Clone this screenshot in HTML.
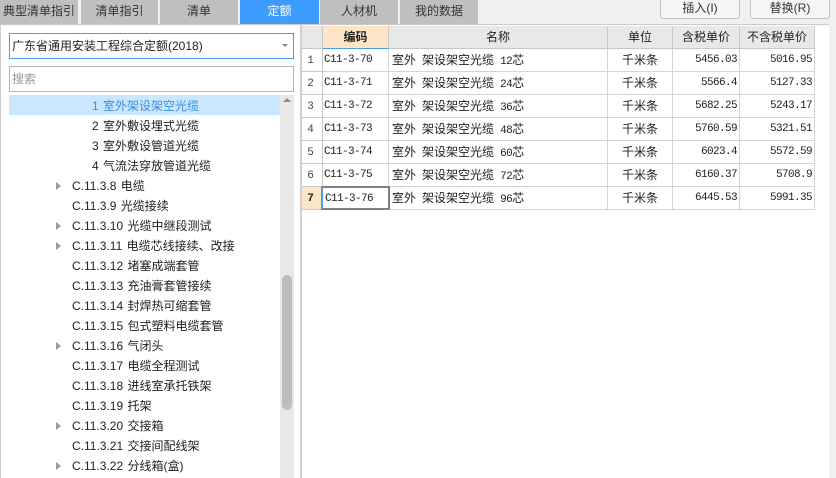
<!DOCTYPE html>
<html><head><meta charset="utf-8">
<style>
html,body{margin:0;padding:0;background:#f0f0f0;}
body{width:836px;height:478px;position:relative;overflow:hidden;font-family:"Liberation Sans","Noto Sans CJK SC",sans-serif;font-size:12px;color:#222;}
.a{position:absolute;white-space:nowrap;}
.tab{position:absolute;top:0;height:24px;background:#bfbfbf;color:#333;text-align:center;line-height:23px;font-size:12px;}
.btn{position:absolute;top:-3px;height:20px;width:78px;background:#f5f5f5;border:1px solid #c4c4c4;border-radius:3px;text-align:center;line-height:21px;color:#333;font-size:12px;}
.t{position:absolute;left:0;height:20px;line-height:20px;white-space:nowrap;color:#222;font-size:12px;word-spacing:1px;}
.arr{position:absolute;left:56px;width:0;height:0;border-left:5px solid #999;border-top:4px solid transparent;border-bottom:4px solid transparent;}
.c{position:absolute;height:23px;line-height:22px;white-space:nowrap;overflow:hidden;box-sizing:border-box;border-right:1px solid #d4d4d4;border-bottom:1px solid #d4d4d4;font-size:12px;color:#222;background:#fff;}
.h{background:#e8e8e8;text-align:center;border-color:#c8c8c8;color:#222;}
.m{font-family:"Liberation Mono","Noto Sans CJK SC",monospace;font-size:11px;letter-spacing:-0.6px;}
.cm{line-height:23px;}
.r{text-align:right;padding-right:2px;}
.nm{padding-left:3px;word-spacing:2.7px;}
.n{background:#fff;text-align:center;font-family:"Liberation Mono",monospace;font-size:11px;border-color:#c8c8c8;color:#444;padding-right:3px;line-height:25px;}
</style></head><body>
<div class="tab" style="left:0;width:78px;">典型清单指引</div>
<div class="tab" style="left:81px;width:77px;">清单指引</div>
<div class="tab" style="left:160px;width:78px;">清单</div>
<div class="tab" style="left:240px;width:79px;background:#3f9cff;color:#fff;">定额</div>
<div class="tab" style="left:320px;width:78px;">人材机</div>
<div class="tab" style="left:400px;width:78px;">我的数据</div>
<div class="btn" style="left:660px;">插入(I)</div>
<div class="btn" style="left:750px;">替换(R)</div>

<div class="a" style="left:0;top:24px;width:300px;height:454px;background:#fff;box-sizing:border-box;border-left:1px solid #d0d0d0;border-top:1px solid #c8c8c8;"></div>
<div class="a" style="left:9px;top:33px;width:285px;height:26px;box-sizing:border-box;border:1px solid #4a9bf0;background:#fff;line-height:24px;padding-left:2px;color:#222;">广东省通用安装工程综合定额(2018)</div>
<div class="a" style="left:282px;top:44px;width:0;height:0;border-top:3px solid #888;border-left:3px solid transparent;border-right:3px solid transparent;"></div>
<div class="a" style="left:9px;top:66px;width:285px;height:26px;box-sizing:border-box;border:1px solid #b5b5b5;background:#fff;line-height:24px;padding-left:2px;color:#999;">搜索</div>

<div class="a" style="left:9px;top:95px;width:271px;height:20px;background:#cbe6ff;"></div>
<div class="t" style="left:92px;top:96px;color:#3f8fd8;">1 室外架设架空光缆</div>
<div class="t" style="left:92px;top:116px;">2 室外敷设埋式光缆</div>
<div class="t" style="left:92px;top:136px;">3 室外敷设管道光缆</div>
<div class="t" style="left:92px;top:156px;">4 气流法穿放管道光缆</div>
<div class="arr" style="top:182px;"></div><div class="t" style="left:72px;top:176px;">C.11.3.8 电缆</div>
<div class="t" style="left:72px;top:196px;">C.11.3.9 光缆接续</div>
<div class="arr" style="top:222px;"></div><div class="t" style="left:72px;top:216px;">C.11.3.10 光缆中继段测试</div>
<div class="arr" style="top:242px;"></div><div class="t" style="left:72px;top:236px;">C.11.3.11 电缆芯线接续、改接</div>
<div class="t" style="left:72px;top:256px;">C.11.3.12 堵塞成端套管</div>
<div class="t" style="left:72px;top:276px;">C.11.3.13 充油膏套管接续</div>
<div class="t" style="left:72px;top:296px;">C.11.3.14 封焊热可缩套管</div>
<div class="t" style="left:72px;top:316px;">C.11.3.15 包式塑料电缆套管</div>
<div class="arr" style="top:342px;"></div><div class="t" style="left:72px;top:336px;">C.11.3.16 气闭头</div>
<div class="t" style="left:72px;top:356px;">C.11.3.17 电缆全程测试</div>
<div class="t" style="left:72px;top:376px;">C.11.3.18 进线室承托铁架</div>
<div class="t" style="left:72px;top:396px;">C.11.3.19 托架</div>
<div class="arr" style="top:422px;"></div><div class="t" style="left:72px;top:416px;">C.11.3.20 交接箱</div>
<div class="t" style="left:72px;top:436px;">C.11.3.21 交接间配线架</div>
<div class="arr" style="top:462px;"></div><div class="t" style="left:72px;top:456px;">C.11.3.22 分线箱(盒)</div>

<div class="a" style="left:280px;top:95px;width:14px;height:383px;background:#e8e8e8;"></div>
<div class="a" style="left:283px;top:98px;width:0;height:0;border-bottom:4px solid #8a8a8a;border-left:4px solid transparent;border-right:4px solid transparent;"></div>
<div class="a" style="left:282px;top:275px;width:10px;height:135px;background:#bdbdbd;border-radius:5px;"></div>

<div class="a" style="left:300px;top:24px;width:529px;height:454px;background:#fff;border-top:1px solid #c8c8c8;border-left:2px solid #d0d0d0;box-sizing:border-box;"></div>

<div class="c h" style="left:302px;top:26px;width:21px;height:23px;"></div>
<div class="c h" style="left:323px;top:26px;width:66px;height:23px;background:#fde6c8;font-weight:bold;border-bottom:1px solid #4a9bf0;">编码</div>
<div class="c h" style="left:389px;top:26px;width:219px;height:23px;">名称</div>
<div class="c h" style="left:608px;top:26px;width:65px;height:23px;">单位</div>
<div class="c h" style="left:673px;top:26px;width:67px;height:23px;">含税单价</div>
<div class="c h" style="left:740px;top:26px;width:75px;height:23px;">不含税单价</div>

<div class="c n" style="left:302px;top:49px;width:21px;">1</div><div class="c m cm" style="left:323px;top:49px;width:66px;padding-left:1px;">C11-3-70</div><div class="c nm" style="left:389px;top:49px;width:219px;">室外 架设架空光缆 <span class="m">12</span>芯</div><div class="c" style="left:608px;top:49px;width:65px;text-align:center;">千米条</div><div class="c m cm r" style="left:673px;top:49px;width:67px;">5456.03</div><div class="c m cm r" style="left:740px;top:49px;width:75px;">5016.95</div>

<div class="c n" style="left:302px;top:72px;width:21px;">2</div><div class="c m cm" style="left:323px;top:72px;width:66px;padding-left:1px;">C11-3-71</div><div class="c nm" style="left:389px;top:72px;width:219px;">室外 架设架空光缆 <span class="m">24</span>芯</div><div class="c" style="left:608px;top:72px;width:65px;text-align:center;">千米条</div><div class="c m cm r" style="left:673px;top:72px;width:67px;">5566.4</div><div class="c m cm r" style="left:740px;top:72px;width:75px;">5127.33</div>

<div class="c n" style="left:302px;top:95px;width:21px;">3</div><div class="c m cm" style="left:323px;top:95px;width:66px;padding-left:1px;">C11-3-72</div><div class="c nm" style="left:389px;top:95px;width:219px;">室外 架设架空光缆 <span class="m">36</span>芯</div><div class="c" style="left:608px;top:95px;width:65px;text-align:center;">千米条</div><div class="c m cm r" style="left:673px;top:95px;width:67px;">5682.25</div><div class="c m cm r" style="left:740px;top:95px;width:75px;">5243.17</div>

<div class="c n" style="left:302px;top:118px;width:21px;">4</div><div class="c m cm" style="left:323px;top:118px;width:66px;padding-left:1px;">C11-3-73</div><div class="c nm" style="left:389px;top:118px;width:219px;">室外 架设架空光缆 <span class="m">48</span>芯</div><div class="c" style="left:608px;top:118px;width:65px;text-align:center;">千米条</div><div class="c m cm r" style="left:673px;top:118px;width:67px;">5760.59</div><div class="c m cm r" style="left:740px;top:118px;width:75px;">5321.51</div>

<div class="c n" style="left:302px;top:141px;width:21px;">5</div><div class="c m cm" style="left:323px;top:141px;width:66px;padding-left:1px;">C11-3-74</div><div class="c nm" style="left:389px;top:141px;width:219px;">室外 架设架空光缆 <span class="m">60</span>芯</div><div class="c" style="left:608px;top:141px;width:65px;text-align:center;">千米条</div><div class="c m cm r" style="left:673px;top:141px;width:67px;">6023.4</div><div class="c m cm r" style="left:740px;top:141px;width:75px;">5572.59</div>

<div class="c n" style="left:302px;top:164px;width:21px;">6</div><div class="c m cm" style="left:323px;top:164px;width:66px;padding-left:1px;">C11-3-75</div><div class="c nm" style="left:389px;top:164px;width:219px;">室外 架设架空光缆 <span class="m">72</span>芯</div><div class="c" style="left:608px;top:164px;width:65px;text-align:center;">千米条</div><div class="c m cm r" style="left:673px;top:164px;width:67px;">6160.37</div><div class="c m cm r" style="left:740px;top:164px;width:75px;">5708.9</div>

<div class="c n" style="left:302px;top:187px;width:20px;background:#fde6c8;font-weight:bold;color:#222;padding-right:2px;">7</div><div class="c m" style="left:321px;top:186px;width:69px;height:24px;padding-left:2px;border:2px solid #808080;border-left-color:#4a9bf0;line-height:23px;">C11-3-76</div><div class="c nm" style="left:390px;top:187px;width:218px;padding-left:2px;">室外 架设架空光缆 <span class="m">96</span>芯</div><div class="c" style="left:608px;top:187px;width:65px;text-align:center;">千米条</div><div class="c m cm r" style="left:673px;top:187px;width:67px;">6445.53</div><div class="c m cm r" style="left:740px;top:187px;width:75px;">5991.35</div>
</body></html>
